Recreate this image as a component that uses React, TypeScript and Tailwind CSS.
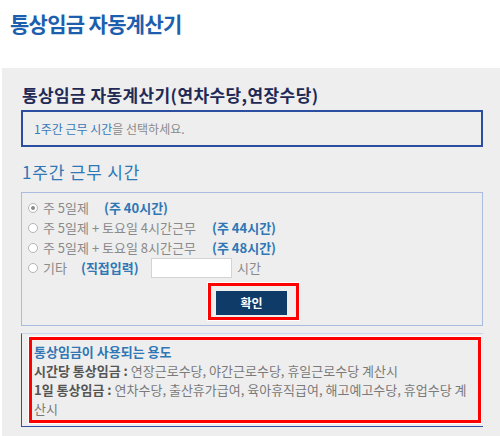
import React from "react";

const font = { fontFamily: '"Noto Sans CJK KR", "Noto Sans", sans-serif' };

function Radio({ checked }: { checked?: boolean }) {
  return (
    <span className="inline-flex items-center justify-center w-[10px] h-[10px] rounded-full border border-[#b5b5b5] bg-white mr-[5px]">
      {checked && <span className="block w-[4px] h-[4px] rounded-full bg-[#8a8a8a]" />}
    </span>
  );
}

export default function App() {
  return (
    <div className="w-[500px] h-[436px] bg-white overflow-hidden" style={font}>
      <div className="h-[68px] pl-[10px] pt-[8px]">
        <h1 className="text-[21px] leading-[30px] font-bold text-[#1d5fae] tracking-[-0.7px]">통상임금 자동계산기</h1>
      </div>
      <div className="ml-[2px] h-[368px] bg-[#eeeeee] pl-[19px] pr-[17px]">
        <h2 className="pt-[16px] text-[17px] leading-[22px] font-bold text-[#1e2a55] pl-[1px] tracking-[0.4px]">
          통상임금 자동계산기(연차수당,연장수당)
        </h2>
        <div className="mt-[4px] h-[37px] border-2 border-[#2b4ea0] flex items-center pl-[11px] text-[12px] text-[#8a8a8a]">
          <span className="text-[#3a7ab8]">1주간 근무 시간</span>을 선택하세요.
        </div>
        <h3 className="mt-[15px] text-[17px] leading-[20px] text-[#2f77b5] pl-[1px] tracking-[0.8px]">1주간 근무 시간</h3>
        <div className="mt-[10px] h-[134px] border border-[#a9bce0] pt-[5px] pl-[6px] text-[13px] text-[#8a8a8a]">
          <div className="h-[20px] flex items-center">
            <Radio checked />
            <span className="w-[61px]">주 5일제</span>
            <span className="font-bold text-[#2f77b5]">(주 40시간)</span>
          </div>
          <div className="h-[20px] flex items-center">
            <Radio />
            <span className="w-[169px]">주 5일제 + 토요일 4시간근무</span>
            <span className="font-bold text-[#2f77b5]">(주 44시간)</span>
          </div>
          <div className="h-[20px] flex items-center">
            <Radio />
            <span className="w-[169px]">주 5일제 + 토요일 8시간근무</span>
            <span className="font-bold text-[#2f77b5]">(주 48시간)</span>
          </div>
          <div className="h-[20px] flex items-center">
            <Radio />
            <span className="w-[38px]">기타</span>
            <span className="w-[70px] font-bold text-[#2f77b5]">(직접입력)</span>
            <span className="w-[81px] h-[20px] bg-white border border-[#d4d4d4]" />
            <span className="ml-[5px]">시간</span>
          </div>
          <div className="mt-[5px] flex">
            <div className="ml-[180px] border-[3px] border-[#ff0000] pt-[5px] pb-[2px] pl-[5px] pr-[9px] shadow-[0_0_0_1px_#ffffff]">
              <div className="w-[71px] h-[24px] bg-[#0f3b69] text-white text-[12px] font-bold flex items-center justify-center">
                확인
              </div>
            </div>
          </div>
        </div>
        <div className="mt-[7px] h-[94px] border-l border-b border-t border-[#3050a8] border-t-[#c9d3ec] pt-[3px] pl-[7px] pr-[2px]">
          <div className="h-[86px] border-[3px] border-[#ff0000] shadow-[0_0_0_1px_#ffffff] pl-[2px] pt-[2px] text-[13px] leading-[19px] text-[#7a7a7a]">
            <div className="font-bold text-[#2f77b5]">통상임금이 사용되는 용도</div>
            <div>
              <span className="font-bold text-[#555555]">시간당 통상임금 : </span>연장근로수당, 야간근로수당, 휴일근로수당 계산시
            </div>
            <div>
              <span className="font-bold text-[#555555]">1일 통상임금 : </span>연차수당, 출산휴가급여, 육아휴직급여, 해고예고수당, 휴업수당 계산시
            </div>
          </div>
        </div>
      </div>
    </div>
  );
}
